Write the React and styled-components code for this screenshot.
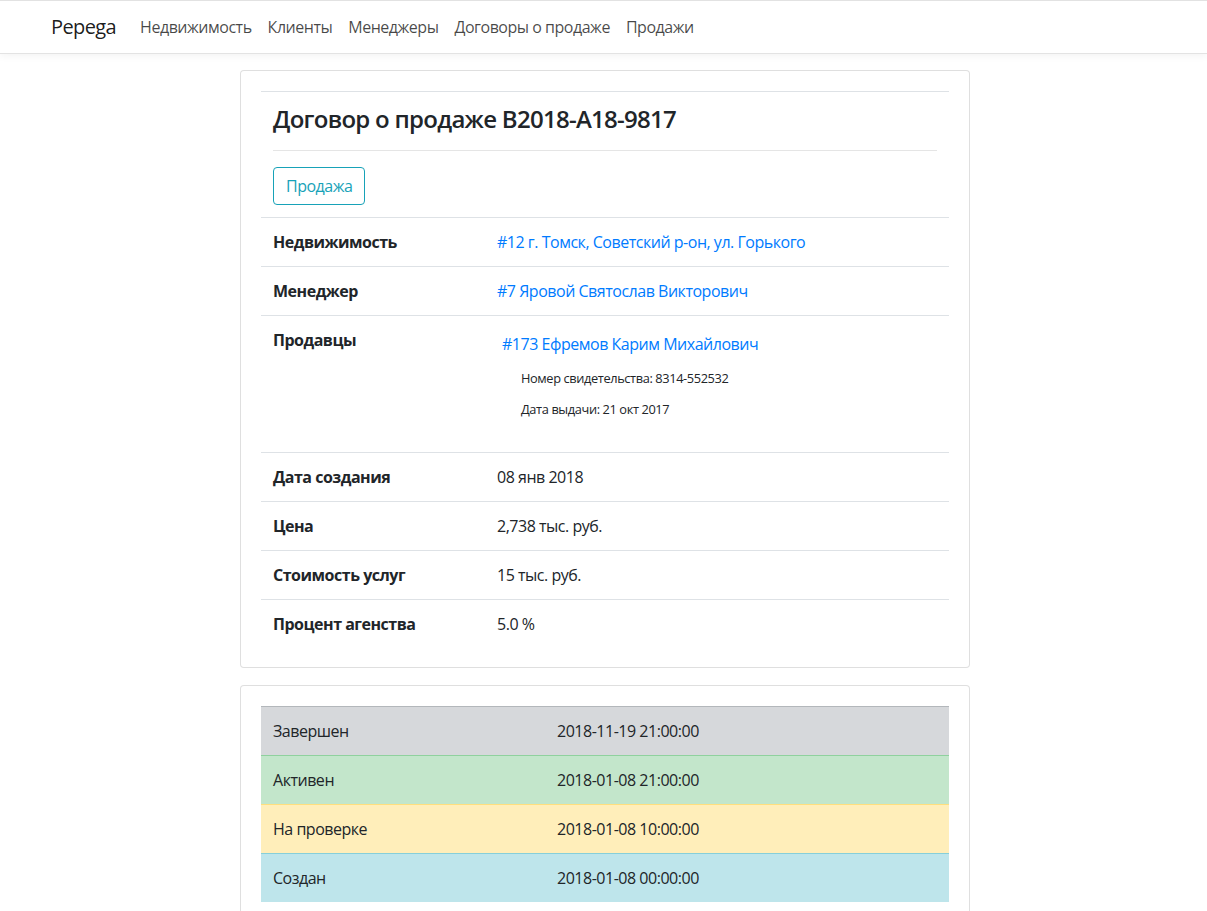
import React from 'react';
import styled, { createGlobalStyle } from 'styled-components';

const GlobalStyle = createGlobalStyle`
    body {
        margin: 0;
        background: #fff;
        color: #212529;
        font-family: "Open Sans", "Noto Sans", sans-serif;
        font-size: 16px;
        line-height: 1.5;
    }
    * {
        box-sizing: border-box;
        letter-spacing: -0.03em;
    }
`;

const Navbar = styled.nav`
    display: flex;
    align-items: center;
    height: 54px;
    padding: 0 51px;
    border-top: 1px solid #e2e2e2;
    border-bottom: 1px solid #e3e3e3;
    box-shadow: 0 2px 8px rgba(0, 0, 0, 0.05);
    background: #fff;
`;

const Brand = styled.a`
    font-size: 20px;
    color: rgba(0, 0, 0, 0.9);
    margin-right: 16px;
    text-decoration: none;
`;

const NavLink = styled.a`
    color: rgba(0, 0, 0, 0.72);
    text-decoration: none;
    padding: 0 8px;
`;

const Main = styled.main`
    width: 730px;
    margin: 16px 0 0 calc(50% - 363.5px);
    display: flex;
    flex-direction: column;
    gap: 17px;
`;

const Card = styled.div`
    border: 1px solid rgba(0, 0, 0, 0.125);
    border-radius: 4px;
    padding: 20px 20px 19px;
    background: #fff;
`;

const Table = styled.table`
    width: 100%;
    border-collapse: collapse;
    table-layout: fixed;
`;

const Col = styled.col`
    width: ${p => p.w || 'auto'};
`;

const Row = styled.tr`
    background: ${p => p.bg || 'transparent'};
`;

const Cell = styled.td`
    padding: 12px;
    border-top: 1px solid ${p => p.line || '#dee2e6'};
    vertical-align: top;
    font-weight: ${p => (p.bold ? 700 : 400)};
`;

const Title = styled.h3`
    margin: 0;
    font-size: 24px;
    font-weight: 600;
    line-height: 30px;
`;

const Rule = styled.hr`
    margin: 16px 0;
    border: 0;
    border-top: 1px solid rgba(0, 0, 0, 0.1);
`;

const OutlineButton = styled.button`
    font-family: inherit;
    font-size: 16px;
    line-height: 24px;
    padding: 6px 12px;
    color: #17a2b8;
    background: transparent;
    border: 1px solid #17a2b8;
    border-radius: 4px;
`;

const Link = styled.a`
    color: #007bff;
    text-decoration: none;
`;

const SellerList = styled.ul`
    list-style: none;
    margin: 4px 0 0;
    padding: 0 0 0 5px;
`;

const SellerInfo = styled.ul`
    list-style: none;
    margin: 13px 0 22px;
    padding: 0 0 0 19px;
    font-size: 12.8px;
    line-height: 18px;
    display: flex;
    flex-direction: column;
    gap: 13px;
`;

const details = [
    ['Дата создания', '08 янв 2018'],
    ['Цена', '2,738 тыс. руб.'],
    ['Стоимость услуг', '15 тыс. руб.'],
    ['Процент агенства', '5.0 %'],
];

const history = [
    ['Завершен', '2018-11-19 21:00:00', '#d6d8db', '#b3b7bb'],
    ['Активен', '2018-01-08 21:00:00', '#c3e6cb', '#8fd19e'],
    ['На проверке', '2018-01-08 10:00:00', '#ffeeba', '#ffdf7e'],
    ['Создан', '2018-01-08 00:00:00', '#bee5eb', '#86cfda'],
];

export default function App() {
    return (
        <>
            <GlobalStyle />
            <Navbar>
                <Brand href="#">Pepega</Brand>
                <NavLink href="#">Недвижимость</NavLink>
                <NavLink href="#">Клиенты</NavLink>
                <NavLink href="#">Менеджеры</NavLink>
                <NavLink href="#">Договоры о продаже</NavLink>
                <NavLink href="#">Продажи</NavLink>
            </Navbar>
            <Main>
                <Card>
                    <Table>
                        <colgroup>
                            <Col w="224px" />
                            <Col />
                        </colgroup>
                        <tbody>
                            <Row>
                                <Cell colSpan={2}>
                                    <Title>Договор о продаже B2018-A18-9817</Title>
                                    <Rule />
                                    <OutlineButton>Продажа</OutlineButton>
                                </Cell>
                            </Row>
                            <Row>
                                <Cell bold>Недвижимость</Cell>
                                <Cell><Link href="#">#12 г. Томск, Советский р-он, ул. Горького</Link></Cell>
                            </Row>
                            <Row>
                                <Cell bold>Менеджер</Cell>
                                <Cell><Link href="#">#7 Яровой Святослав Викторович</Link></Cell>
                            </Row>
                            <Row>
                                <Cell bold>Продавцы</Cell>
                                <Cell>
                                    <SellerList>
                                        <li>
                                            <Link href="#">#173 Ефремов Карим Михайлович</Link>
                                            <SellerInfo>
                                                <li>Номер свидетельства: 8314-552532</li>
                                                <li>Дата выдачи: 21 окт 2017</li>
                                            </SellerInfo>
                                        </li>
                                    </SellerList>
                                </Cell>
                            </Row>
                            {details.map(([label, value]) => (
                                <Row key={label}>
                                    <Cell bold>{label}</Cell>
                                    <Cell>{value}</Cell>
                                </Row>
                            ))}
                        </tbody>
                    </Table>
                </Card>
                <Card>
                    <Table>
                        <colgroup>
                            <Col w="284px" />
                            <Col />
                        </colgroup>
                        <tbody>
                            {history.map(([status, time, bg, line]) => (
                                <Row key={status} bg={bg}>
                                    <Cell line={line}>{status}</Cell>
                                    <Cell line={line}>{time}</Cell>
                                </Row>
                            ))}
                        </tbody>
                    </Table>
                </Card>
            </Main>
        </>
    );
}
